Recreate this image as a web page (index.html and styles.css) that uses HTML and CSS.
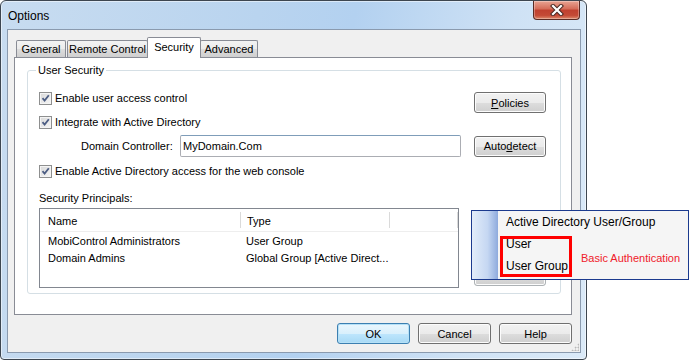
FILE: index.html
```html
<!DOCTYPE html>
<html lang="en">
<head>
    <meta charset="UTF-8">
    <title>Options</title>
    <link rel="stylesheet" href="styles.css">
</head>
<body>
    <div class="window">
        <div class="titlebar">
            <span class="title">Options</span>
            <button class="close" title="Close">
                <svg width="16" height="12" viewBox="0 0 16 12">
                    <path d="M4 2 L12 10 M12 2 L4 10" stroke="#4a2a24" stroke-width="4.2" stroke-linecap="square"/>
                    <path d="M4 2 L12 10 M12 2 L4 10" stroke="#ffffff" stroke-width="2.2" stroke-linecap="square"/>
                </svg>
            </button>
        </div>

        <div class="client">
            <div class="tabs">
                <span class="tab tab-general">General</span>
                <span class="tab tab-remote">Remote Control</span>
                <span class="tab tab-security active">Security</span>
                <span class="tab tab-advanced">Advanced</span>
            </div>

            <div class="page">
                <fieldset class="group">
                    <legend>User Security</legend>

                    <div class="row row-first">
                        <label class="check"><span class="box"></span>Enable user access control</label>
                        <button class="btn"><u>P</u>olicies</button>
                    </div>

                    <div class="row row-ad">
                        <label class="check"><span class="box"></span>Integrate with Active Directory</label>
                    </div>

                    <div class="row row-domain">
                        <span class="field-label">Domain Controller:</span>
                        <input type="text" class="text-input" value="MyDomain.Com">
                        <button class="btn">Auto<u>d</u>etect</button>
                    </div>

                    <div class="row row-web">
                        <label class="check"><span class="box"></span>Enable Active Directory access for the web console</label>
                    </div>

                    <div class="principals-label">Security Principals:</div>

                    <div class="row row-list">
                        <div class="listview">
                            <div class="list-head">
                                <span class="col col-name">Name</span>
                                <span class="col col-type">Type</span>
                                <span class="col col-rest"></span>
                            </div>
                            <div class="list-row">
                                <span class="col col-name">MobiControl Administrators</span>
                                <span class="col col-type">User Group</span>
                            </div>
                            <div class="list-row">
                                <span class="col col-name">Domain Admins</span>
                                <span class="col col-type">Global Group [Active Direct...</span>
                            </div>
                        </div>
                        <div class="side-buttons">
                            <button class="btn btn-faded">Remove</button>
                        </div>
                    </div>
                </fieldset>
            </div>

            <div class="actions">
                <button class="btn btn-default">OK</button>
                <button class="btn">Cancel</button>
                <button class="btn">Help</button>
            </div>
            <div class="grip"></div>
        </div>
    </div>

    <div class="menu">
        <div class="menu-strip"></div>
        <div class="menu-items">
            <div class="menu-item">Active Directory User/Group</div>
            <div class="menu-item">User</div>
            <div class="menu-item">User Group</div>
        </div>
        <div class="highlight"></div>
        <div class="note">Basic Authentication</div>
    </div>
</body>
</html>
```

FILE: styles.css
```css
body {
    margin: 0;
    background: #ffffff;
    font-family: 'Liberation Sans', Arial, sans-serif;
    font-size: 11px;
    color: #000;
}
.window {
    width: 585px;
    height: 358px;
    border: 1px solid #3d4650;
    border-radius: 6px 6px 4px 4px;
    background: linear-gradient(100deg, #c8dcf0 0%, #b9d4ef 40%, #b3d1f0 55%, #cfe2f5 80%, #dbeaf8 100%);
    box-shadow: inset 0 0 0 1px rgba(255,255,255,0.5);
}
.titlebar {
    height: 28px;
    display: flex;
    align-items: flex-start;
}
.title {
    font-size: 12px;
    line-height: 14px;
    margin: 8px 0 0 7px;
}
.close {
    margin: 0 6px 0 auto;
    width: 47px;
    height: 19px;
    padding: 0;
    border: 1px solid #5a2b24;
    border-top: none;
    border-radius: 0 0 4px 4px;
    background: linear-gradient(#e8a493 0%, #d46b57 45%, #c0402f 50%, #c44a36 80%, #de8a6c 100%);
    box-shadow: inset 0 0 0 1px rgba(255,255,255,0.3);
    display: flex;
    align-items: center;
    justify-content: center;
}
.client {
    width: 572px;
    height: 322px;
    margin-left: 6px;
    border: 1px solid #8a9aae;
    background: #f0f0f0;
    display: flex;
    flex-direction: column;
}
.tabs {
    display: flex;
    align-items: flex-end;
    margin: 7px 0 0 8px;
    height: 20px;
    position: relative;
    z-index: 1;
}
.tab {
    height: 16px;
    line-height: 17px;
    text-align: center;
    white-space: nowrap;
    border: 1px solid #898c95;
    border-bottom: none;
    border-radius: 2px 2px 0 0;
    background: linear-gradient(#f3f3f3, #ebebeb 50%, #dddddd 51%, #cfcfcf);
    margin-right: 1px;
}
.tab-general { width: 48px; }
.tab-remote { width: 79px; }
.tab-security { width: 52px; }
.tab-advanced { width: 56px; }
.tab.active {
    height: 20px;
    line-height: 18px;
    background: #ffffff;
    margin: 0 -1px -1px -2px;
    position: relative;
}
.page {
    width: 556px;
    height: 256px;
    margin-left: 6px;
    border: 1px solid #898c95;
    background: #ffffff;
}
.group {
    width: 506px;
    height: 204px;
    margin: 5px 0 0 12px;
    padding: 14px 14px 11px 11px;
    border: 1px solid #d5dfe5;
    border-radius: 3px;
    box-sizing: content-box;
}
.group legend {
    padding: 0 2px;
    margin-left: -3px;
    line-height: 15px;
    color: #000;
}
.row {
    display: flex;
    align-items: flex-start;
}
.check {
    display: flex;
    align-items: center;
    height: 13px;
    line-height: 13px;
    white-space: nowrap;
}
.box {
    width: 11px;
    height: 11px;
    border: 1px solid #8e8f8f;
    margin-right: 3px;
    background:
        url("data:image/svg+xml;utf8,<svg xmlns='http://www.w3.org/2000/svg' width='11' height='11'><path d='M2.5 5.2 L4.6 7.6 L8.8 2.2' fill='none' stroke='%234c5d83' stroke-width='1.8'/></svg>") no-repeat center,
        linear-gradient(135deg, #d8d8d8, #f6f6f6);
    box-shadow: inset 0 0 0 1px #f4f4f4;
}
.btn {
    font-family: inherit;
    font-size: 11px;
    width: 72px;
    height: 21px;
    padding: 0;
    border: 1px solid #707070;
    border-radius: 3px;
    background: linear-gradient(#f2f2f2, #ebebeb 50%, #dddddd 51%, #cfcfcf);
    box-shadow: inset 0 0 0 1px #fcfcfc;
    color: #000;
}
.row-first {
    justify-content: space-between;
}
.row-ad {
    margin-top: 3px;
}
.row-domain {
    margin-top: 6px;
    align-items: center;
}
.field-label {
    width: 99px;
    margin-left: 42px;
}
.text-input {
    width: 275px;
    height: 18px;
    padding: 1px 2px;
    border: 1px solid #abadb3;
    border-top-color: #7f9db9;
    border-radius: 2px;
    font-family: inherit;
    font-size: 11px;
    margin-right: 13px;
}
.row-web {
    margin-top: 8px;
}
.principals-label {
    margin-top: 14px;
    line-height: 13px;
}
.row-list {
    margin-top: 3px;
    justify-content: space-between;
}
.listview {
    width: 418px;
    height: 78px;
    border: 1px solid #828790;
    background: #ffffff;
}
.list-head {
    display: flex;
    height: 22px;
    border-bottom: 1px solid #eeeeee;
    align-items: center;
}
.list-head .col {
    height: 16px;
    line-height: 18px;
    border-right: 1px solid #dadada;
}
.list-head .col-rest {
    width: 67px;
}
.list-row {
    display: flex;
    height: 17px;
    line-height: 19px;
}
.col {
    white-space: nowrap;
}
.col-name {
    width: 192px;
    padding-left: 8px;
}
.col-type {
    width: 142px;
    padding-left: 6px;
}
.side-buttons {
    display: flex;
    flex-direction: column;
    padding-top: 57px;
}
.btn-faded {
    color: #a0a0a0;
    border-color: #adb2b5;
}
.actions {
    display: flex;
    justify-content: flex-end;
    gap: 8px;
    margin: 8px 8px 0 0;
}
.actions .btn {
    width: 73px;
    height: 21px;
}
.btn-default {
    border-color: #3c7fb1;
    background: linear-gradient(#eaf6fd, #d9f0fc 50%, #bee6fd 51%, #a7d9f5);
    box-shadow: inset 0 0 0 1px #b6e1f7;
}
.grip {
    align-self: flex-end;
    width: 8px;
    height: 8px;
    margin: -1px 1px 0 0;
    background: radial-gradient(circle, #b8b8b8 0.8px, transparent 1.2px) 0 0 / 3px 3px;
    clip-path: polygon(100% 0, 100% 100%, 0 100%);
}
.menu {
    position: absolute;
    left: 471px;
    top: 210px;
    width: 216px;
    height: 68px;
    border: 1px solid #1b3a8e;
    background: #f5f5f5;
    display: flex;
}
.menu-strip {
    width: 26px;
    background: linear-gradient(to right, #e2ecf9, #c5d7f2 60%, #8eaadd);
}
.menu-items {
    padding-left: 8px;
}
.menu-item {
    height: 22px;
    line-height: 22px;
    font-size: 12px;
    white-space: nowrap;
}
.highlight {
    position: absolute;
    left: 28px;
    top: 25px;
    width: 66px;
    height: 35px;
    border: 3px solid #ff0000;
}
.note {
    position: absolute;
    left: 109px;
    top: 40px;
    color: #f0202a;
    font-size: 11px;
    line-height: 14px;
    white-space: nowrap;
}
```
